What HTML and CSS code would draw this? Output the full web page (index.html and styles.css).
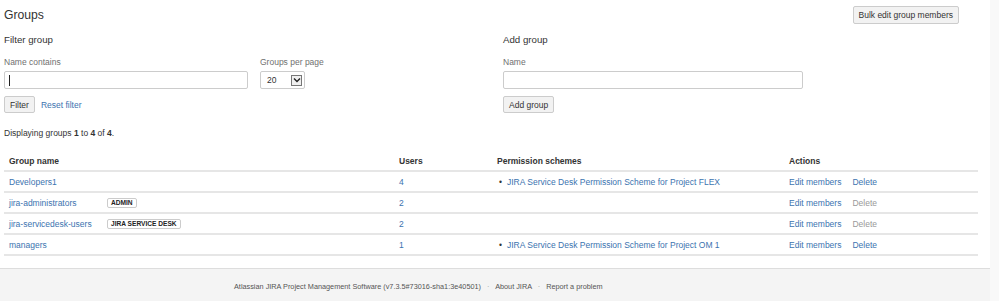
FILE: index.html
```html
<!DOCTYPE html>
<html lang="en">
<head>
  <meta charset="UTF-8" />
  <meta name="viewport" content="width=device-width, initial-scale=1.0" />
  <title>Groups</title>
  <link rel="stylesheet" href="styles.css">
</head>
<body>
  <div class="page">
    <main class="content">
      <header class="page-header">
        <h1>Groups</h1>
        <button class="btn">Bulk edit group members</button>
      </header>

      <div class="forms">
        <section class="form-block">
          <h3>Filter group</h3>
          <div class="field-row">
            <div class="field">
              <label>Name contains</label>
              <div class="text-input name-filter"><span class="caret"></span></div>
            </div>
            <div class="field">
              <label>Groups per page</label>
              <div class="select">
                <span>20</span>
                <span class="select-arrow">
                  <svg width="8" height="6" viewBox="0 0 8 6"><path d="M1 1.5 L4 4.5 L7 1.5" fill="none" stroke="#222" stroke-width="1.4"/></svg>
                </span>
              </div>
            </div>
          </div>
          <div class="actions-row">
            <button class="btn">Filter</button>
            <a href="#">Reset filter</a>
          </div>
        </section>

        <section class="form-block">
          <h3>Add group</h3>
          <div class="field">
            <label>Name</label>
            <div class="text-input add-name"></div>
          </div>
          <div class="actions-row">
            <button class="btn">Add group</button>
          </div>
        </section>
      </div>

      <p class="results">Displaying groups <b>1</b> to <b>4</b> of <b>4</b>.</p>

      <table class="groups">
        <colgroup>
          <col class="c-name">
          <col class="c-users">
          <col class="c-perm">
          <col class="c-actions">
        </colgroup>
        <thead>
          <tr>
            <th>Group name</th>
            <th>Users</th>
            <th>Permission schemes</th>
            <th>Actions</th>
          </tr>
        </thead>
        <tbody>
          <tr>
            <td><a href="#" class="group-name">Developers1</a></td>
            <td><a href="#">4</a></td>
            <td><ul class="schemes"><li><a href="#">JIRA Service Desk Permission Scheme for Project FLEX</a></li></ul></td>
            <td class="ops"><a href="#">Edit members</a><a href="#">Delete</a></td>
          </tr>
          <tr>
            <td><a href="#" class="group-name">jira-administrators</a><span class="lozenge">Admin</span></td>
            <td><a href="#">2</a></td>
            <td></td>
            <td class="ops"><a href="#">Edit members</a><span class="disabled">Delete</span></td>
          </tr>
          <tr>
            <td><a href="#" class="group-name">jira-servicedesk-users</a><span class="lozenge">JIRA Service Desk</span></td>
            <td><a href="#">2</a></td>
            <td></td>
            <td class="ops"><a href="#">Edit members</a><span class="disabled">Delete</span></td>
          </tr>
          <tr>
            <td><a href="#" class="group-name">managers</a></td>
            <td><a href="#">1</a></td>
            <td><ul class="schemes"><li><a href="#">JIRA Service Desk Permission Scheme for Project OM 1</a></li></ul></td>
            <td class="ops"><a href="#">Edit members</a><a href="#">Delete</a></td>
          </tr>
        </tbody>
      </table>
    </main>

    <footer class="footer">
      <span>Atlassian JIRA Project Management Software (v7.3.5#73016-sha1:3e40501)</span>
      <span class="sep">·</span>
      <a href="#">About JIRA</a>
      <span class="sep">·</span>
      <a href="#">Report a problem</a>
    </footer>
  </div>
</body>
</html>
```

FILE: styles.css
```css
body {
  margin: 0;
  background: #f9f9f9;
  font-family: 'Liberation Sans', Arial, sans-serif;
  font-size: 8.5px;
  color: #333;
}

a {
  color: #3b73af;
  text-decoration: none;
}

.page {
  width: 990px;
  min-height: 100vh;
  background: #fff;
  display: flex;
  flex-direction: column;
}

.content {
  padding: 0 12px 0 4px;
}

.page-header {
  height: 30px;
  display: flex;
  justify-content: space-between;
  align-items: center;
  padding-right: 19px;
}

h1 {
  margin: 0;
  font-size: 12.2px;
  font-weight: normal;
  line-height: 14px;
}

h3 {
  margin: 3px 0 0;
  font-size: 9.7px;
  font-weight: normal;
  line-height: 14px;
}

.btn {
  height: 18px;
  padding: 0 5px;
  border: 1px solid #ccc;
  border-radius: 2px;
  background: #f2f2f2;
  font-family: inherit;
  font-size: 8.5px;
  color: #333;
  line-height: 16px;
}

.forms {
  display: grid;
  grid-template-columns: 499px 1fr;
}

.field-row {
  display: flex;
  gap: 12px;
}

.field {
  display: flex;
  flex-direction: column;
}

label {
  margin-top: 9px;
  line-height: 12px;
  color: #707070;
}

.text-input {
  margin-top: 3px;
  height: 18px;
  box-sizing: border-box;
  border: 1px solid #ccc;
  border-radius: 2px;
  background: #fff;
  display: flex;
  align-items: center;
  padding-left: 4px;
}

.name-filter {
  width: 244px;
}

.add-name {
  width: 300px;
}

.caret {
  width: 1px;
  height: 11px;
  background: #222;
}

.select {
  margin-top: 3px;
  width: 45px;
  height: 18px;
  box-sizing: border-box;
  border: 1px solid #ccc;
  border-radius: 2px;
  display: flex;
  align-items: center;
  justify-content: space-between;
  padding: 0 2px 0 6px;
}

.select-arrow {
  width: 11px;
  height: 11px;
  box-sizing: border-box;
  border: 1px solid #777;
  background: #f0f0f0;
  display: flex;
  align-items: center;
  justify-content: center;
}

.actions-row {
  margin-top: 7px;
  display: flex;
  align-items: center;
  gap: 6px;
}

.actions-row .btn {
  height: 17px;
}

.results {
  margin: 14px 0 0;
  line-height: 12px;
}

.groups {
  margin-top: 12px;
  width: 974px;
  border-collapse: collapse;
}

.c-name { width: 390px; }
.c-users { width: 98px; }
.c-perm { width: 292px; }
.c-actions { width: 194px; }

.groups th,
.groups td {
  height: 19px;
  padding: 0 5px;
  text-align: left;
  vertical-align: middle;
  border-bottom: 2px solid #e6e6e6;
  line-height: 12px;
}

.groups th {
  font-weight: bold;
  color: #333;
}

.group-name {
  display: inline-block;
  width: 98px;
}

.lozenge {
  display: inline-block;
  padding: 0 3px;
  border: 1px solid #ccc;
  border-radius: 2px;
  font-size: 6.6px;
  font-weight: bold;
  text-transform: uppercase;
  line-height: 8px;
  color: #222;
  vertical-align: 1px;
}

.schemes {
  margin: 0;
  padding: 0;
  list-style: none;
}

.schemes li::before {
  content: '•';
  display: inline-block;
  width: 8px;
  padding-left: 2px;
  color: #333;
}

.ops a,
.ops span {
  margin-right: 11px;
}

.disabled {
  color: #999;
}

.footer {
  flex: 1;
  margin-top: 12px;
  border-top: 1px solid #ddd;
  background: #f4f4f4;
  padding: 13px 0 0 234px;
  font-size: 7.3px;
  color: #555;
  line-height: 10px;
}

.footer a {
  color: #555;
}

.footer .sep {
  margin: 0 4px;
  color: #999;
}
```
